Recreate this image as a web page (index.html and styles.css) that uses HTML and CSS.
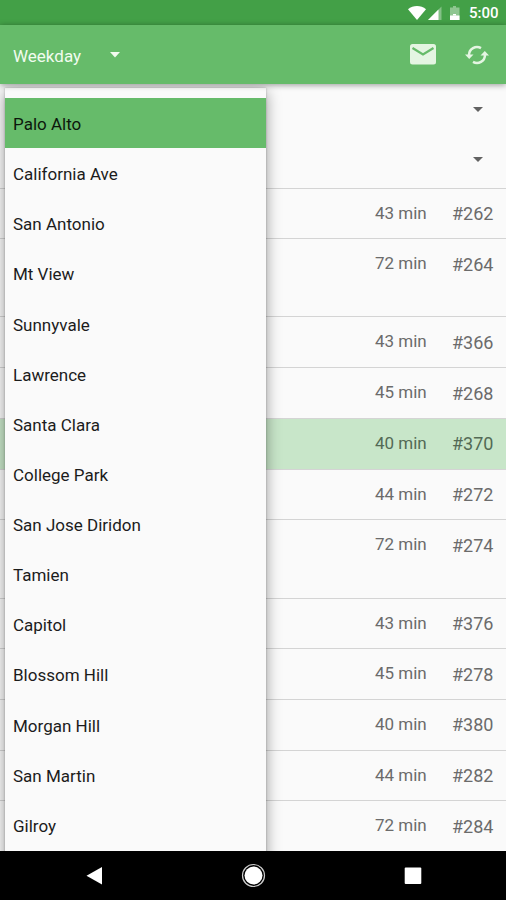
FILE: index.html
```html
<!DOCTYPE html>
<html lang="en">
<head>
<meta charset="utf-8">
<title>Train schedule</title>
<link rel="stylesheet" href="styles.css">
</head>
<body>
<div class="screen">
  <header class="status">
    <svg class="status-icons" width="58" height="25" viewBox="0 0 58 25">
      <path d="M0 9.300C5 4.900 13 4.900 18 9.300L9 20Z" fill="#fff"/>
      <path d="M33.500 6.500V20H20Z" fill="#fff" opacity=".35"/>
      <path d="M30.500 9.500V20H20Z" fill="#fff"/>
      <path d="M45 6h3v1.500h3.500V20h-9.500V7.500h3z" fill="#fff" opacity=".4"/>
      <path d="M42 15.500h9.500V20H42z" fill="#fff"/>
      <path d="M45 14h3v1.500h-3z" fill="#fff"/>
    </svg>
    <span class="clock">5:00</span>
  </header>
  <div class="toolbar">
    <span class="day">Weekday</span>
    <svg class="day-arrow" width="10" height="6" viewBox="0 0 10 6"><path d="M0 0h10L5 5.500z" fill="#f1fbef"/></svg>
    <svg class="mail" width="26" height="21" viewBox="0 0 26 21">
      <rect width="26" height="20.500" rx="2.500" fill="#e4f5e2"/>
      <path d="M2.500 4L13 10.500L23.500 4" fill="none" stroke="#66bb6a" stroke-width="2.200"/>
    </svg>
    <svg class="refresh" width="24" height="20" viewBox="0 0 24 20" fill="none" stroke="#e4f5e2" stroke-width="2.500">
      <path d="M16 3.100A8 8 0 0 0 4 10M8 16.900A8 8 0 0 0 20 10"/>
      <path d="M0 9.500h8.500L4.200 14zM24 10.500h-8.500L19.800 6z" fill="#e4f5e2" stroke="none"/>
    </svg>
  </div>
  <main class="content">
    <div class="pickers">
      <div class="picker"><svg width="10" height="6" viewBox="0 0 10 6"><path d="M0 0h10L5 5z" fill="#626262"/></svg></div>
      <div class="picker"><svg width="10" height="6" viewBox="0 0 10 6"><path d="M0 0h10L5 5z" fill="#626262"/></svg></div>
    </div>
    <div class="trips">
      <div class="trip"><span class="time">43 min</span><span class="train">#262</span></div>
      <div class="trip tall"><span class="time">72 min</span><span class="train">#264</span></div>
      <div class="trip"><span class="time">43 min</span><span class="train">#366</span></div>
      <div class="trip"><span class="time">45 min</span><span class="train">#268</span></div>
      <div class="trip next"><span class="time">40 min</span><span class="train">#370</span></div>
      <div class="trip"><span class="time">44 min</span><span class="train">#272</span></div>
      <div class="trip tall"><span class="time">72 min</span><span class="train">#274</span></div>
      <div class="trip"><span class="time">43 min</span><span class="train">#376</span></div>
      <div class="trip"><span class="time">45 min</span><span class="train">#278</span></div>
      <div class="trip"><span class="time">40 min</span><span class="train">#380</span></div>
      <div class="trip"><span class="time">44 min</span><span class="train">#282</span></div>
      <div class="trip"><span class="time">72 min</span><span class="train">#284</span></div>
    </div>
    <ul class="menu">
      <li class="selected">Palo Alto</li>
      <li>California Ave</li>
      <li>San Antonio</li>
      <li>Mt View</li>
      <li>Sunnyvale</li>
      <li>Lawrence</li>
      <li>Santa Clara</li>
      <li>College Park</li>
      <li>San Jose Diridon</li>
      <li>Tamien</li>
      <li>Capitol</li>
      <li>Blossom Hill</li>
      <li>Morgan Hill</li>
      <li>San Martin</li>
      <li>Gilroy</li>
    </ul>
  </main>
  <nav class="navbar">
    <svg width="18" height="20" viewBox="0 0 18 20"><path d="M17 1v17.500L1.500 9.800z" fill="#fff"/></svg>
    <svg width="26" height="26" viewBox="0 0 26 26"><circle cx="12.500" cy="12.500" r="11" fill="none" stroke="#ccc" stroke-width="1.200"/><circle cx="12.500" cy="12.500" r="9" fill="#fff"/></svg>
    <svg width="18" height="18" viewBox="0 0 18 18"><rect x=".7" y=".5" width="16.600" height="16.600" rx="1" fill="#fff"/></svg>
  </nav>
</div>
</body>
</html>
```
FILE: styles.css
```css
* { box-sizing: border-box; }
body { margin: 0; }
.screen {
  width: 506px;
  height: 900px;
  display: flex;
  flex-direction: column;
  overflow: hidden;
  background: #fafafa;
  font-family: Roboto, "Liberation Sans", sans-serif;
}
.status {
  height: 25px;
  flex: none;
  display: flex;
  justify-content: flex-end;
  align-items: center;
  gap: 3px;
  padding-right: 8px;
  background: #43a047;
}
.status-icons { flex: none; }
.clock {
  width: 29px;
  color: #fff;
  font-size: 15px;
  font-weight: 500;
  line-height: 25px;
  padding-top: 2px;
  white-space: nowrap;
}
.toolbar {
  height: 59px;
  flex: none;
  display: flex;
  align-items: center;
  padding: 0 17px 0 13px;
  background: #66bb6a;
  box-shadow: 0 1px 6px rgba(0, 0, 0, .4);
  z-index: 2;
}
.day {
  width: 97px;
  color: #f1fbef;
  font-size: 17px;
  padding-top: 2px;
}
.mail { margin-left: auto; margin-right: 29px; }
.content {
  position: relative;
  height: 767px;
  flex: none;
  overflow: hidden;
}
.pickers { height: 103.5px; padding-top: 2px; }
.picker {
  height: 50px;
  display: flex;
  justify-content: flex-end;
  padding: 21px 23px 0 0;
}
.trip {
  height: 50.7px;
  display: flex;
  justify-content: flex-end;
  align-items: flex-start;
  padding-right: 12px;
  border-top: 1px solid #d4d4d4;
  color: #6b6b6b;
  line-height: 20px;
}
.trip.tall { height: 78.3px; }
.trip.next { background: #c8e6c9; color: #536a55; }
.time { font-size: 17px; width: 77px; padding-top: 14px; }
.train { font-size: 18px; width: 42px; padding-top: 15.500px; white-space: nowrap; }
.menu {
  position: absolute;
  left: 5px;
  top: 4px;
  width: 260.500px;
  height: 780px;
  margin: 0;
  padding: 10px 0 0;
  list-style: none;
  background: #fafafa;
  box-shadow: 0 4px 14px rgba(0, 0, 0, .4), 0 0 2px rgba(0, 0, 0, .25);
}
.menu li {
  height: 50.14px;
  padding: 1px 0 0 8px;
  line-height: 51px;
  font-size: 17px;
  color: #1c1c1c;
}
.menu .selected { background: #66bb6a; color: #0c170c; }
.navbar {
  height: 49px;
  flex: none;
  display: flex;
  justify-content: space-between;
  align-items: center;
  padding: 0 84px 0 85px;
  background: #000;
}
```
